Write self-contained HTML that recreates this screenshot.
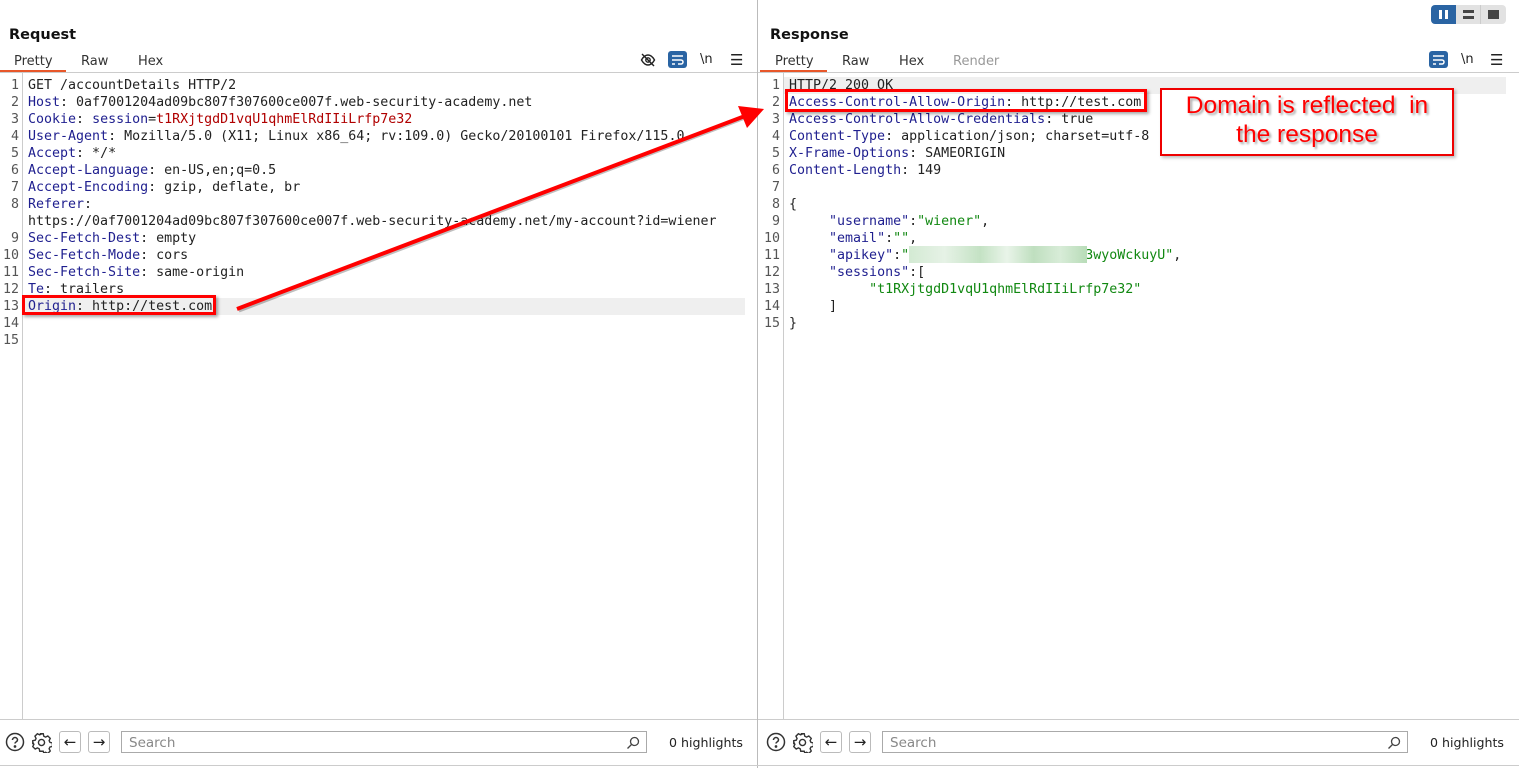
<!DOCTYPE html>
<html><head><meta charset="utf-8"><style>
*{margin:0;padding:0;box-sizing:border-box}
body{width:1519px;height:768px;background:#fff;position:relative;overflow:hidden;font-family:"DejaVu Sans","Liberation Sans",sans-serif;color:#222}
.a{position:absolute}
.title{font-weight:bold;font-size:14.5px;color:#111}
.tab{font-size:13px;color:#333}
.code{font-family:"DejaVu Sans Mono","Liberation Mono",monospace;font-size:13.3px;white-space:pre;line-height:17px;color:#222}
.num{font-family:"DejaVu Sans Mono",monospace;font-size:13.3px;color:#555;line-height:17px;text-align:right}
.k{color:#1f1f8f}.r{color:#b00000}.g{color:#118811}
.hl{background:#efefef}
.ic{font-size:13px}
.btn{border:1px solid #bbb;border-radius:3px;width:22px;height:22px;text-align:center;line-height:20px;font-size:15px;color:#222}
.search{border:1px solid #aaa;height:22px;font-size:13.5px;color:#888;padding:3px 7px}
.hi{font-size:12.6px;color:#222}
</style></head><body>

<div class="a" style="left:1431px;top:5px;width:25px;height:19px;background:#2a64a3;border-radius:4px 0 0 4px"></div>
<div class="a" style="left:1439px;top:10px;width:3px;height:9px;background:#fff"></div>
<div class="a" style="left:1445px;top:10px;width:3px;height:9px;background:#fff"></div>
<div class="a" style="left:1456px;top:5px;width:50px;height:19px;background:#e2e2e2;border-radius:0 4px 4px 0"></div>
<div class="a" style="left:1480px;top:5px;width:1px;height:19px;background:#ccc"></div>
<div class="a" style="left:1463px;top:10px;width:11px;height:3px;background:#444"></div>
<div class="a" style="left:1463px;top:16px;width:11px;height:3px;background:#444"></div>
<div class="a" style="left:1488px;top:10px;width:11px;height:9px;background:#444"></div>

<div class="a" style="left:757px;top:0;width:1px;height:768px;background:#bbb"></div>

<!-- LEFT -->
<div class="a title" style="left:9px;top:27px">Request</div>
<div class="a tab" style="left:14px;top:54px">Pretty</div>
<div class="a tab" style="left:81px;top:54px">Raw</div>
<div class="a tab" style="left:138px;top:54px">Hex</div>
<div class="a" style="left:0;top:70px;width:66px;height:2px;background:#e8572a"></div>
<div class="a" style="left:0;top:72px;width:757px;height:1px;background:#ccc"></div>
<svg class="a" style="left:640px;top:52px" width="16" height="16" viewBox="0 0 16 16" fill="none" stroke="#222" stroke-width="1.4"><path d="M1.5 8c2-3.5 4-5 6.5-5s4.5 1.5 6.5 5c-2 3.5-4 5-6.5 5S3.5 11.5 1.5 8z"/><circle cx="8" cy="8" r="2.2"/><path d="M2 2l12 12"/></svg>
<div class="a" style="left:668px;top:51px;width:19px;height:17px;background:#2a64a3;border-radius:3px"></div>
<svg class="a" style="left:668px;top:51px" width="19" height="17" viewBox="0 0 19 17" fill="none" stroke="#fff" stroke-width="1.5"><path d="M4 5h11M4 9h9a2 2 0 010 4h-3M4 13h3"/></svg>
<div class="a ic" style="left:700px;top:52px">\n</div>
<div class="a" style="left:730px;top:51px;font-size:15px">☰</div>

<div class="a" style="left:22px;top:73px;width:1px;height:646px;background:#ccc"></div>
<div class="a hl" style="left:23px;top:298px;width:722px;height:17px"></div>
<div class="a num" style="left:0;top:77px;width:19px">1<br>2<br>3<br>4<br>5<br>6<br>7<br>8<br><br>9<br>10<br>11<br>12<br>13<br>14<br>15</div>
<div class="a code" style="left:28px;top:77px">GET /accountDetails HTTP/2
<span class="k">Host</span>: 0af7001204ad09bc807f307600ce007f.web-security-academy.net
<span class="k">Cookie</span>: <span class="k">session</span>=<span class="r">t1RXjtgdD1vqU1qhmElRdIIiLrfp7e32</span>
<span class="k">User-Agent</span>: Mozilla/5.0 (X11; Linux x86_64; rv:109.0) Gecko/20100101 Firefox/115.0
<span class="k">Accept</span>: */*
<span class="k">Accept-Language</span>: en-US,en;q=0.5
<span class="k">Accept-Encoding</span>: gzip, deflate, br
<span class="k">Referer</span>:
https://0af7001204ad09bc807f307600ce007f.web-security-academy.net/my-account?id=wiener
<span class="k">Sec-Fetch-Dest</span>: empty
<span class="k">Sec-Fetch-Mode</span>: cors
<span class="k">Sec-Fetch-Site</span>: same-origin
<span class="k">Te</span>: trailers
<span class="k">Origin</span>: http://test.com</div>
<div class="a" style="left:22px;top:295px;width:194px;height:20px;border:3px solid #f00;box-shadow:2px 2px 3px rgba(0,0,0,.35)"></div>

<div class="a" style="left:0;top:719px;width:757px;height:1px;background:#ccc"></div>
<div class="a" style="left:0;top:765px;width:1519px;height:1px;background:#ccc"></div>
<svg class="a" style="left:5px;top:732px" width="20" height="20" viewBox="0 0 20 20" fill="none" stroke="#333" stroke-width="1.5"><circle cx="10" cy="10" r="8.5"/><path d="M7.5 8a2.5 2.5 0 115 0c0 1.8-2.5 1.8-2.5 3.5"/><circle cx="10" cy="14.5" r=".6" fill="#333"/></svg>
<svg class="a" style="left:31px;top:732px" width="21" height="21" viewBox="0 0 24 24" fill="none" stroke="#333" stroke-width="1.6"><path d="M10 2h4l.6 2.8 2 1 2.6-1.3 2.8 2.8-1.3 2.6 1 2 2.8.6v4l-2.8.6-1 2 1.3 2.6-2.8 2.8-2.6-1.3-2 1L14 22h-4l-.6-2.8-2-1-2.6 1.3-2.8-2.8 1.3-2.6-1-2L2 14v-4l2.8-.6 1-2-1.3-2.6 2.8-2.8 2.6 1.3 2-1z"/><circle cx="12" cy="12" r="3.5"/></svg>
<div class="a btn" style="left:59px;top:731px">←</div>
<div class="a btn" style="left:88px;top:731px">→</div>
<div class="a search" style="left:121px;top:731px;width:526px">Search</div>
<svg class="a" style="left:626px;top:736px" width="14" height="14" viewBox="0 0 14 14" fill="none" stroke="#444" stroke-width="1.3"><circle cx="8.5" cy="5.5" r="4"/><path d="M5.5 8.5L1.5 12.5"/></svg>
<div class="a hi" style="left:669px;top:735px">0 highlights</div>

<!-- RIGHT -->
<div class="a title" style="left:770px;top:27px">Response</div>
<div class="a tab" style="left:775px;top:54px">Pretty</div>
<div class="a tab" style="left:842px;top:54px">Raw</div>
<div class="a tab" style="left:899px;top:54px">Hex</div>
<div class="a tab" style="left:953px;top:54px;color:#999">Render</div>
<div class="a" style="left:760px;top:70px;width:67px;height:2px;background:#e8572a"></div>
<div class="a" style="left:758px;top:72px;width:761px;height:1px;background:#ccc"></div>
<div class="a" style="left:1429px;top:51px;width:19px;height:17px;background:#2a64a3;border-radius:3px"></div>
<svg class="a" style="left:1429px;top:51px" width="19" height="17" viewBox="0 0 19 17" fill="none" stroke="#fff" stroke-width="1.5"><path d="M4 5h11M4 9h9a2 2 0 010 4h-3M4 13h3"/></svg>
<div class="a ic" style="left:1461px;top:52px">\n</div>
<div class="a" style="left:1490px;top:51px;font-size:15px">☰</div>

<div class="a" style="left:783px;top:73px;width:1px;height:646px;background:#ccc"></div>
<div class="a hl" style="left:784px;top:77px;width:722px;height:17px"></div>
<div class="a num" style="left:760px;top:77px;width:20px">1<br>2<br>3<br>4<br>5<br>6<br>7<br>8<br>9<br>10<br>11<br>12<br>13<br>14<br>15</div>
<div class="a code" style="left:789px;top:77px">HTTP/2 200 OK
<span class="k">Access-Control-Allow-Origin</span>: http://test.com
<span class="k">Access-Control-Allow-Credentials</span>: true
<span class="k">Content-Type</span>: application/json; charset=utf-8
<span class="k">X-Frame-Options</span>: SAMEORIGIN
<span class="k">Content-Length</span>: 149

{
     <span class="k">"username"</span>:<span class="g">"wiener"</span>,
     <span class="k">"email"</span>:<span class="g">""</span>,
     <span class="k">"apikey"</span>:<span class="g">"                      3wyoWckuyU"</span>,
     <span class="k">"sessions"</span>:[
          <span class="g">"t1RXjtgdD1vqU1qhmElRdIIiLrfp7e32"</span>
     ]
}</div>
<div class="a" style="left:909px;top:246px;width:178px;height:17px;background:linear-gradient(90deg,#d3ead3,#e6f2e6 20%,#c4e2c4 40%,#e9f4e9 55%,#bfdfbf 70%,#d8ecd8 85%,#b8dcb8)"></div>
<div class="a" style="left:785px;top:89px;width:362px;height:23px;border:3px solid #f00;box-shadow:2px 2px 3px rgba(0,0,0,.35)"></div>

<div class="a" style="left:1160px;top:88px;width:294px;height:68px;border:2px solid #e00;background:#fff;box-shadow:2px 2px 3px rgba(0,0,0,.25)"></div>
<div class="a" style="left:1160px;top:91px;width:294px;text-align:center;font-family:'Liberation Sans',sans-serif;font-size:24.5px;line-height:29px;color:#f00;text-shadow:2px 2px 2px rgba(0,0,0,.35)">Domain is reflected&nbsp; in<br>the response</div>

<div class="a" style="left:758px;top:719px;width:761px;height:1px;background:#ccc"></div>
<svg class="a" style="left:766px;top:732px" width="20" height="20" viewBox="0 0 20 20" fill="none" stroke="#333" stroke-width="1.5"><circle cx="10" cy="10" r="8.5"/><path d="M7.5 8a2.5 2.5 0 115 0c0 1.8-2.5 1.8-2.5 3.5"/><circle cx="10" cy="14.5" r=".6" fill="#333"/></svg>
<svg class="a" style="left:792px;top:732px" width="21" height="21" viewBox="0 0 24 24" fill="none" stroke="#333" stroke-width="1.6"><path d="M10 2h4l.6 2.8 2 1 2.6-1.3 2.8 2.8-1.3 2.6 1 2 2.8.6v4l-2.8.6-1 2 1.3 2.6-2.8 2.8-2.6-1.3-2 1L14 22h-4l-.6-2.8-2-1-2.6 1.3-2.8-2.8 1.3-2.6-1-2L2 14v-4l2.8-.6 1-2-1.3-2.6 2.8-2.8 2.6 1.3 2-1z"/><circle cx="12" cy="12" r="3.5"/></svg>
<div class="a btn" style="left:820px;top:731px">←</div>
<div class="a btn" style="left:849px;top:731px">→</div>
<div class="a search" style="left:882px;top:731px;width:526px">Search</div>
<svg class="a" style="left:1387px;top:736px" width="14" height="14" viewBox="0 0 14 14" fill="none" stroke="#444" stroke-width="1.3"><circle cx="8.5" cy="5.5" r="4"/><path d="M5.5 8.5L1.5 12.5"/></svg>
<div class="a hi" style="left:1430px;top:735px">0 highlights</div>

<svg class="a" style="left:0;top:0" width="1519" height="768">
<line x1="239" y1="311" x2="745" y2="118" stroke="rgba(0,0,0,.25)" stroke-width="3"/>
<line x1="237" y1="309" x2="745" y2="116" stroke="#f00" stroke-width="4"/>
<polygon points="764,109 738,106 747,128" fill="#f00"/>
</svg>
</body></html>
